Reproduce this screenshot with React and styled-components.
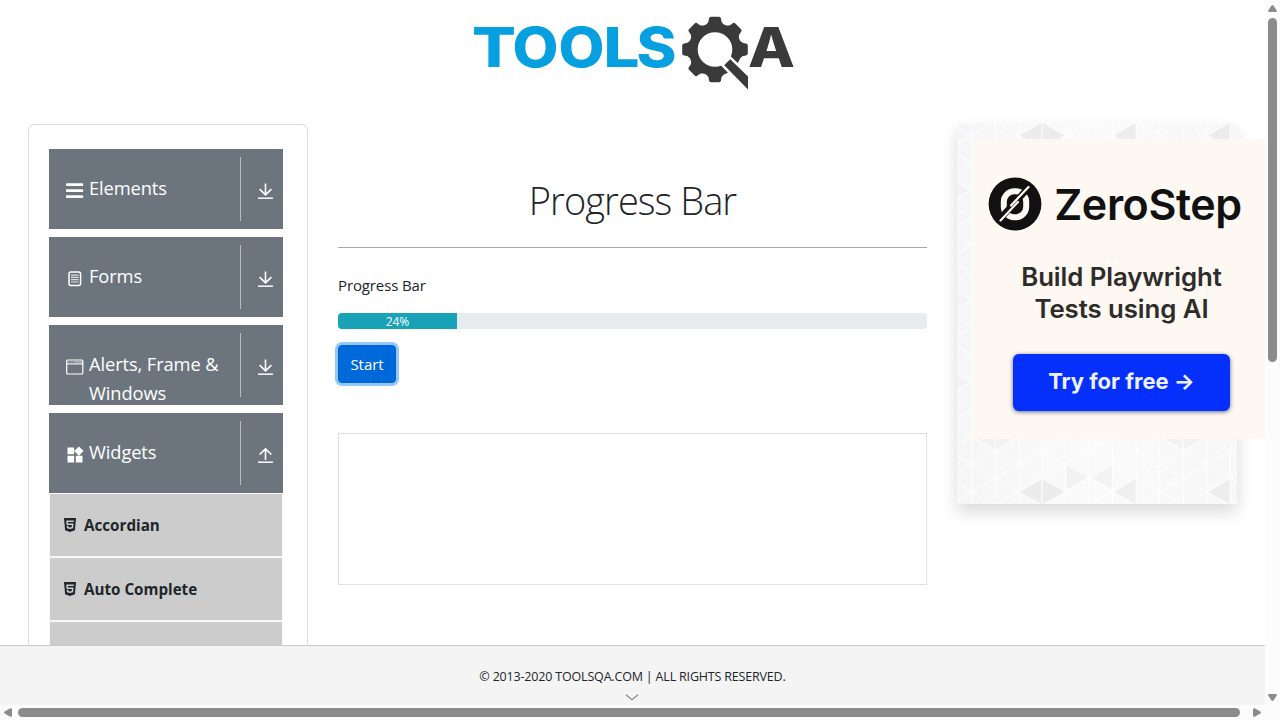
import React from "react";
import styled, { createGlobalStyle } from "styled-components";
import { FaHtml5 } from "react-icons/fa";
import { MdWidgets } from "react-icons/md";

const GlobalStyle = createGlobalStyle`
  *, *::before, *::after { box-sizing: border-box; }
  html, body { margin: 0; overflow: hidden; background: #fff; }
  body {
    font-family: "Open Sans", "Noto Sans", sans-serif;
    font-size: 15px;
    line-height: 1.5;
    color: #212529;
  }
  h1, p, ul { margin: 0; padding: 0; }
`;

const Window = styled.div`
  display: grid;
  grid-template: 705px 15px / 1265px 15px;
  width: 1280px;
  height: 720px;
  overflow: hidden;
`;

const Page = styled.div`
  display: flex;
  flex-direction: column;
  min-width: 0;
  overflow: hidden;
`;

const Content = styled.div`
  flex: 1;
  min-height: 0;
  overflow: hidden;
`;

const Header = styled.header`
  height: 124px;
  padding: 12px 0 0 470px;

  svg { display: block; }
`;

const Columns = styled.div`
  display: grid;
  grid-template-columns: 280px 589px 308px;
  column-gap: 30px;
  align-items: start;
  padding-left: 28px;
`;

const Sidebar = styled.nav`
  height: 900px;
  padding: 24px 24px 0 20px;
  border: 1px solid #ddd;
  border-radius: 6px;
`;

const Group = styled.section`
  margin-bottom: 8px;
`;

const GroupHeader = styled.div`
  display: flex;
  height: 80px;
  padding: 8px 0 8px 16px;
  overflow: hidden;
  background: #6c757d;
  color: #fff;
`;

const GroupIcon = styled.span`
  display: flex;
  align-items: center;
  justify-content: center;
  width: 20px;
  height: 20px;
  margin: 24px 4px 0 0;
  flex: none;
`;

const GroupTitle = styled.span`
  flex: 1;
  padding-top: 16px;
  font-size: 18.3px;
  line-height: 29px;
  letter-spacing: -0.1px;
  white-space: nowrap;
`;

const GroupToggle = styled.span`
  display: flex;
  justify-content: center;
  width: 43px;
  padding: 26px 0 0 7px;
  border-left: 1px solid #bdbbb8;
`;

const SubList = styled.ul`
  list-style: none;
`;

const SubItem = styled.li`
  display: flex;
  align-items: center;
  gap: 8px;
  height: 64px;
  padding-left: 14px;
  border: 1px solid #f8f8f8;
  background: #ccc;
  font-size: 15.2px;
  font-weight: 700;
  letter-spacing: 0;

  svg { flex: none; width: 12px; height: 16px; }
`;

const Main = styled.main`
  padding-top: 46px;
`;

const Title = styled.h1`
  height: 78px;
  border-bottom: 1px solid #a9a9a9;
  font-size: 38px;
  font-weight: 300;
  line-height: 60px;
  letter-spacing: -0.95px;
  text-align: center;
`;

const Label = styled.p`
  height: 24px;
  margin: 25px 0 16px;
  line-height: 24px;
  letter-spacing: -0.12px;
`;

const Progress = styled.div`
  display: flex;
  height: 16px;
  margin-bottom: 16px;
  overflow: hidden;
  border-radius: 4px;
  background: #e9ecef;
`;

const ProgressBar = styled.div`
  background: #17a2b8;
  color: #fff;
  font-size: 12px;
  line-height: 17px;
  letter-spacing: -0.1px;
  text-align: center;
`;

const StartButton = styled.button`
  display: block;
  width: 58px;
  height: 38px;
  padding: 0;
  border: 1px solid #0062cc;
  border-radius: 4px;
  background: #0069d9;
  box-shadow: 0 0 0 3px rgba(38, 143, 255, 0.5);
  color: #fff;
  font: inherit;
  letter-spacing: -0.05px;
`;

const AdSlot = styled.div`
  height: 152px;
  margin-top: 50px;
  border: 1px solid #e1e1e1;
`;

const Promo = styled.aside`
  display: grid;
  width: 280px;
  height: 380px;
  background: #f8f8f8;
  box-shadow: 0 8px 16px rgba(0, 0, 0, 0.15);

  > * { grid-area: 1 / 1; }
`;

const Banner = styled.div`
  display: flex;
  flex-direction: column;
  align-items: center;
  width: 300px;
  height: 300px;
  margin: 15px 0 0 15px;
  padding-top: 36px;
  background: #fdf8f2;
  font-family: Inter, sans-serif;
`;

const Brand = styled.div`
  display: flex;
  align-items: center;
  gap: 12px;
  height: 58px;
  margin-right: 14px;
  color: #111;
  font-size: 43px;
  font-weight: 600;
  line-height: 56px;
  letter-spacing: -0.4px;
`;

const Pitch = styled.p`
  margin: 28px 1px 0 0;
  color: #2e2c2b;
  font-size: 25.8px;
  font-weight: 600;
  line-height: 32px;
  letter-spacing: -0.08px;
  text-align: center;
  white-space: nowrap;
`;

const TryButton = styled.div`
  width: 217px;
  height: 57px;
  margin: 29px 1px 0 0;
  border-radius: 6px;
  background: #0530fc;
  box-shadow: 0 1px 4px rgba(20, 30, 70, 0.65);
  color: #edf0ff;
  font-size: 22px;
  font-weight: 700;
  line-height: 54px;
  text-align: center;
`;

const Footer = styled.footer`
  display: flex;
  flex-direction: column;
  align-items: center;
  height: 60px;
  padding-top: 21px;
  border-top: 1px solid #c9c9c9;
  background: #f4f4f4;
  font-size: 12.5px;
  line-height: 20px;
  letter-spacing: -0.18px;

  svg { margin: 7px 2px 0 0; }
`;

const Scrollbar = styled.div`
  display: flex;
  flex-direction: ${(p) => (p.$vertical ? "column" : "row")};
  align-items: center;
  padding: ${(p) => (p.$vertical ? "5px 0 4px" : "0 4px")};
  background: #fcfcfc;

  svg { display: block; flex: none; fill: #8b8b8b; }
`;

const Thumb = styled.div`
  flex: none;
  width: ${(p) => (p.$vertical ? "9px" : "1222px")};
  height: ${(p) => (p.$vertical ? "344px" : "9px")};
  margin: ${(p) => (p.$vertical ? "6px 0 auto" : "0 auto 0 6px")};
  border-radius: 5px;
  background: #8b8b8b;
`;

const Corner = styled.div`
  background: #fcfcfc;
`;

const GEAR_TEETH = [0, 45, 90, 180, 225, 270, 315];

function Logo() {
  return (
    <svg width="330" height="84" viewBox="470 12 330 84" aria-label="ToolsQA">
      <g fontFamily="Inter, sans-serif" fontSize="54.5" fontWeight="800">
        <text y="67" fill="#069fdf">
          <tspan x="472" textLength="44" lengthAdjust="spacingAndGlyphs">T</tspan>
          <tspan x="512.5" textLength="46" lengthAdjust="spacingAndGlyphs">O</tspan>
          <tspan x="558.5" textLength="46" lengthAdjust="spacingAndGlyphs">O</tspan>
          <tspan x="603.5" textLength="36" lengthAdjust="spacingAndGlyphs">L</tspan>
          <tspan x="636.5" textLength="40" lengthAdjust="spacingAndGlyphs">S</tspan>
        </text>
        <text y="67" fill="#3a3a3a" x="748" textLength="47" lengthAdjust="spacingAndGlyphs">A</text>
      </g>
      <g fill="#3a3a3a">
        {GEAR_TEETH.map((angle) => (
          <path
            key={angle}
            d="M705 26 L707.6 23 Q708.7 22 708.8 20 L709 18.5 Q709.3 16.7 711 16.7 H719 Q720.7 16.7 721 18.5 L721.2 20 Q721.3 22 722.4 23 L725 26Z"
            transform={`rotate(${angle} 715 49.5)`}
          />
        ))}
        <circle cx="715" cy="49.5" r="21.9" fill="none" stroke="#3a3a3a" strokeWidth="9.2" />
      </g>
      <path
        d="M724.2 65.2 L730.2 59.2 L748 76.5 V89.5Z"
        fill="#3a3a3a"
        stroke="#fff"
        strokeWidth="5"
        paintOrder="stroke"
      />
    </svg>
  );
}

function MenuIcon() {
  return (
    <svg width="18" height="16" viewBox="0 0 18 16" fill="#fff">
      <rect x="0" y="0.3" width="17.2" height="2.7" rx="0.8" />
      <rect x="0" y="6.3" width="17.2" height="2.7" rx="0.8" />
      <rect x="0" y="12.3" width="17.2" height="2.7" rx="0.8" />
    </svg>
  );
}

function FormIcon() {
  return (
    <svg width="14" height="16" viewBox="0 0 14 16" fill="none" stroke="#fff">
      <rect x="1" y="1.1" width="11.6" height="13.4" rx="2" strokeWidth="1.5" />
      <path d="M3 4.1h7.6M3 6.4h7.6M3 8.7h7.6M3 11h7.6" strokeWidth="1.2" opacity=".75" />
    </svg>
  );
}

function WindowIcon() {
  return (
    <svg width="18" height="16" viewBox="0 0 18 16" fill="none" stroke="#fff">
      <rect x="0.7" y="1" width="16.1" height="14" rx="1" strokeWidth="1.2" />
      <path d="M0.7 4.9h16.1" strokeWidth="1.1" />
      <path d="M2.2 2.9h1.4M5 2.9h1.4M7.6 2.9h8.4" opacity=".55" strokeWidth="1.4" />
    </svg>
  );
}

function ToggleIcon({ open }) {
  return (
    <svg width="17" height="18" viewBox="0 0 17 18" fill="none" stroke="#fff" strokeWidth="1.6">
      <path d={open ? "M8.5 13V2M2.6 7.5L8.5 1.8L14.4 7.5" : "M8.5 0.4V12M2.6 6.2L8.5 11.9L14.4 6.2"} />
      <path d="M1 15.2h15" opacity=".9" />
    </svg>
  );
}

function ZeroStepMark() {
  return (
    <svg width="54" height="54" viewBox="0 0 54 54">
      <circle cx="27" cy="27" r="26.4" fill="#111" />
      <rect x="15.8" y="14.3" width="22.4" height="26" rx="10.5" fill="none" stroke="#fdf8f2" strokeWidth="6" />
      <path d="M11 43L42 9" stroke="#111" strokeWidth="6.5" />
      <path d="M12.5 43.5L30 25M23 28.5L40.5 10" stroke="#fdf8f2" strokeWidth="2.2" strokeLinecap="round" />
    </svg>
  );
}

const COL = 23.5;
const SIDE = 27.4;
const gridX = (k) => 14.7 + COL * k;

const DARK_FACETS = [
  [3, 0, "#ececec"], [3, 13, "#ececec"],
  [7, 0, "#ededed"], [11, 0, "#ececec"],
  [1, 11, "#f2f2f2"], [9, 11, "#f2f2f2"], [11, 13, "#ededed"],
  [7, 13, "#efefef"], [-1, 2, "#f3f3f3"], [-1, 6, "#f4f4f4"], [-1, 9, "#f3f3f3"],
];

function Facets() {
  const columns = Array.from({ length: 13 }, (_, i) => i - 1);
  return (
    <svg width="280" height="380" viewBox="0 0 280 380">
      <defs>
        <linearGradient id="facetFade" x1="0" y1="0" x2="1" y2="0">
          <stop offset="0" stopColor="#f6f6f6" />
          <stop offset="0.5" stopColor="#fafafa" />
          <stop offset="1" stopColor="#f7f7f7" />
        </linearGradient>
      </defs>
      <rect width="280" height="380" fill="url(#facetFade)" />
      {DARK_FACETS.map(([k, m, fill]) => {
        const y = 11.5 + SIDE * m;
        const half = k === 7 || k === 11;
        const right = half ? gridX(k) : gridX(k + 1);
        return (
          <path
            key={`${k}:${m}`}
            fill={fill}
            d={`M${gridX(k - 1)} ${y}L${gridX(k)} ${y - SIDE / 2}L${right} ${y}L${gridX(k)} ${y + SIDE / 2}Z`}
          />
        );
      })}
      <path d="M109 339L131.5 352.5L109 366Z" fill="#f2f2f2" />
      <path d="M155.7 339L132.5 352.5L155.7 366Z" fill="#f3f3f3" />
      <g stroke="#fff" strokeWidth="1.3" opacity="0.85">
        {columns.map((k) => (
          <path key={k} d={`M${gridX(k)} 0V380`} />
        ))}
        {Array.from({ length: 28 }, (_, i) => {
          const y = 11.5 + SIDE * (i - 6);
          return (
            <path
              key={i}
              d={`M${gridX(-2)} ${y - SIDE}L${gridX(12)} ${y + SIDE * 6}M${gridX(-2)} ${y - SIDE}L${gridX(12)} ${y - SIDE * 8}`}
            />
          );
        })}
      </g>
    </svg>
  );
}

const GROUPS = [
  { title: "Elements", icon: <MenuIcon /> },
  { title: "Forms", icon: <FormIcon /> },
  { title: <>Alerts, Frame &amp;<br />Windows</>, icon: <WindowIcon /> },
  { title: "Widgets", icon: <MdWidgets size={20} />, items: ["Accordian", "Auto Complete", ""] },
];

export default function App() {
  const progress = 24;
  return (
    <Window>
      <GlobalStyle />
      <Page>
        <Content>
          <Header><Logo /></Header>
          <Columns>
            <Sidebar>
              {GROUPS.map(({ title, icon, items }, i) => (
                <Group key={i}>
                  <GroupHeader>
                    <GroupIcon>{icon}</GroupIcon>
                    <GroupTitle>{title}</GroupTitle>
                    <GroupToggle><ToggleIcon open={Boolean(items)} /></GroupToggle>
                  </GroupHeader>
                  {items && (
                    <SubList>
                      {items.map((item) => (
                        <SubItem key={item}>{item && <FaHtml5 />}{item}</SubItem>
                      ))}
                    </SubList>
                  )}
                </Group>
              ))}
            </Sidebar>
            <Main>
              <Title>Progress Bar</Title>
              <Label>Progress Bar</Label>
              <Progress>
                <ProgressBar style={{ width: `${(progress / 589) * 496}%` }}>{progress}%</ProgressBar>
              </Progress>
              <StartButton>Start</StartButton>
              <AdSlot />
            </Main>
            <Promo>
              <Facets />
              <Banner>
                <Brand><ZeroStepMark />ZeroStep</Brand>
                <Pitch>Build Playwright<br />Tests using AI</Pitch>
                <TryButton>Try for free →</TryButton>
              </Banner>
            </Promo>
          </Columns>
        </Content>
        <Footer>
          © 2013-2020 TOOLSQA.COM | ALL RIGHTS RESERVED.
          <svg width="14" height="7" viewBox="0 0 14 7" fill="none" stroke="#888" strokeWidth="1.2">
            <path d="M1 0.8L7 5.8L13 0.8" />
          </svg>
        </Footer>
      </Page>
      <Scrollbar $vertical>
        <svg width="9" height="7" viewBox="0 0 9 7"><path d="M3.6 .6Q4.5 -.4 5.4 .6L8.8 5.4Q9 7 8 7H1Q0 7 .2 5.4Z" /></svg>
        <Thumb $vertical />
        <svg width="9" height="7" viewBox="0 0 9 7"><path d="M3.6 6.4Q4.5 7.4 5.4 6.4L8.8 1.6Q9 0 8 0H1Q0 0 .2 1.6Z" /></svg>
      </Scrollbar>
      <Scrollbar>
        <svg width="8" height="9" viewBox="0 0 8 9"><path d="M.6 3.6Q-.4 4.5 .6 5.4L6.4 8.8Q8 9 8 8V1Q8 0 6.4 .2Z" /></svg>
        <Thumb />
        <svg width="8" height="9" viewBox="0 0 8 9"><path d="M7.4 3.6Q8.4 4.5 7.4 5.4L1.6 8.8Q0 9 0 8V1Q0 0 1.6 .2Z" /></svg>
      </Scrollbar>
      <Corner />
    </Window>
  );
}
